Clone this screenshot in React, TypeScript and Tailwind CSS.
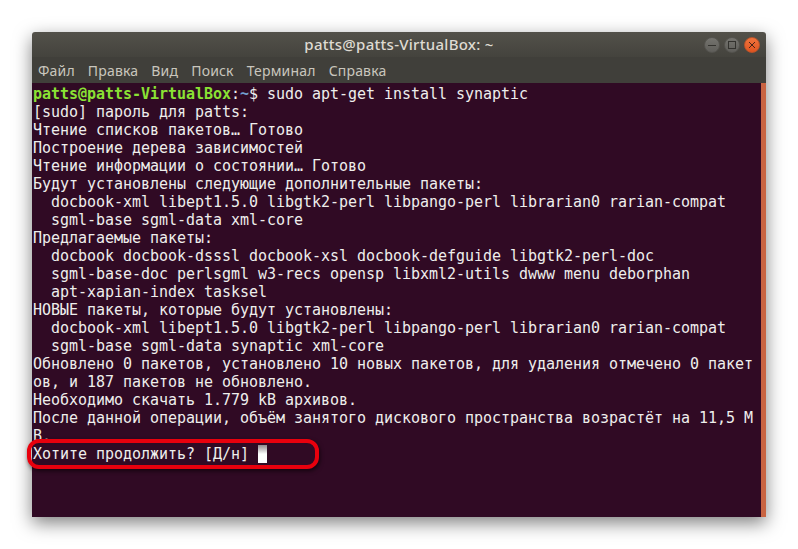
import React from 'react';

const MENU_ITEMS = ['Файл', 'Правка', 'Вид', 'Поиск', 'Терминал', 'Справка'];

const OUTPUT_LINES = [
  '[sudo] пароль для patts:',
  'Чтение списков пакетов… Готово',
  'Построение дерева зависимостей',
  'Чтение информации о состоянии… Готово',
  'Будут установлены следующие дополнительные пакеты:',
  '  docbook-xml libept1.5.0 libgtk2-perl libpango-perl librarian0 rarian-compat',
  '  sgml-base sgml-data xml-core',
  'Предлагаемые пакеты:',
  '  docbook docbook-dsssl docbook-xsl docbook-defguide libgtk2-perl-doc',
  '  sgml-base-doc perlsgml w3-recs opensp libxml2-utils dwww menu deborphan',
  '  apt-xapian-index tasksel',
  'НОВЫЕ пакеты, которые будут установлены:',
  '  docbook-xml libept1.5.0 libgtk2-perl libpango-perl librarian0 rarian-compat',
  '  sgml-base sgml-data synaptic xml-core',
  'Обновлено 0 пакетов, установлено 10 новых пакетов, для удаления отмечено 0 пакет',
  'ов, и 187 пакетов не обновлено.',
  'Необходимо скачать 1.779 kB архивов.',
  'После данной операции, объём занятого дискового пространства возрастёт на 11,5 M',
  'В.',
];

const WindowButton: React.FC<{ kind: 'min' | 'max' | 'close' }> = ({ kind }) => (
  <div
    className={`w-[16px] h-[16px] rounded-full border flex items-center justify-center ${
      kind === 'close'
        ? 'border-[#b8532a] bg-gradient-to-b from-[#f0733c] to-[#df5420]'
        : 'border-[#55544f] bg-gradient-to-b from-[#74736e] to-[#5f5e5a]'
    }`}
  >
    <svg width="10" height="10" viewBox="0 0 10 10" fill="none" stroke={kind === 'close' ? '#4a2417' : '#33322e'} strokeWidth="1">
      {kind === 'min' && <path d="M1 5.5h8" />}
      {kind === 'max' && <rect x="1.5" y="1.5" width="7" height="7" />}
      {kind === 'close' && <path d="M2 2l6 6M8 2l-6 6" />}
    </svg>
  </div>
);

export default function App() {
  return (
    <div className="w-[798px] h-[549px] bg-white pl-[32px] pt-[32px] overflow-hidden">
      <div className="relative w-[734px] h-[485px] flex flex-col shadow-[0_6px_18px_rgba(0,0,0,0.5)] rounded-t-[3px]">
        {/* Title bar */}
        <div className="h-[25px] shrink-0 flex items-center justify-between bg-gradient-to-b from-[#53514a] to-[#44433d] rounded-t-[3px]">
          <div className="w-[62px]" />
          <span className="text-[15px] font-medium tracking-[0.28px] text-[#dfdbd2] font-['Noto_Sans',sans-serif]">patts@patts-VirtualBox: ~</span>
          <div className="flex items-center gap-[4px] pr-[6px]">
            <WindowButton kind="min" />
            <WindowButton kind="max" />
            <WindowButton kind="close" />
          </div>
        </div>

        {/* Menu */}
        <div className="h-[26px] shrink-0 flex items-center pl-[6px] pt-[1px] gap-[13px] bg-[#403f3a] text-[14px] tracking-[0.18px] text-[#c9c6bd] font-['Noto_Sans',sans-serif]">
          {MENU_ITEMS.map(item => (
            <span key={item}>{item}</span>
          ))}
        </div>

        {/* Terminal */}
        <div className="flex-1 flex min-h-0">
          <div className="flex-1 bg-[#300a24] pl-[1px] pt-[2px] font-['DejaVu_Sans_Mono',monospace] text-[15px] leading-[18px] tracking-[-0.03px] text-[#eeeeec] whitespace-pre">
            <div>
              <span className="font-bold text-[#8ae234]">patts@patts-VirtualBox</span>
              <span>:</span>
              <span className="font-bold text-[#729fcf]">~</span>
              <span>$ sudo apt-get install synaptic</span>
            </div>
            {OUTPUT_LINES.map((line, i) => (
              <div key={i}>{line}</div>
            ))}
            <div className="flex">
              <span>Хотите продолжить? [Д/н] </span>
              <span className="w-[9px] h-[18px] bg-gradient-to-b from-[#8f8a8d] via-[#ffffff] to-[#ffffff]" />
            </div>
          </div>
          <div className="w-[5px] bg-[#c96442]" />
        </div>

        {/* Red highlight */}
        <div className="absolute left-[-5px] top-[407px] w-[292px] h-[30px] rounded-[12px] border-[4px] border-[#e8000d] shadow-[1px_2px_4px_rgba(0,0,0,0.6)]" />
      </div>
    </div>
  );
}
